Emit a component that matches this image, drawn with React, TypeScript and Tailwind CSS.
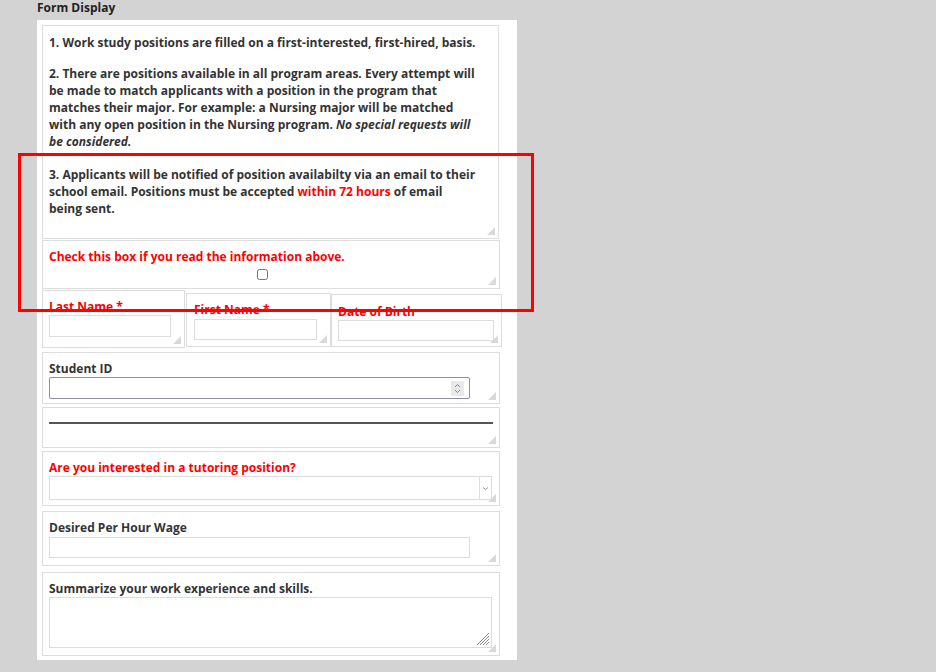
import React from 'react';

const font = { fontFamily: '"Open Sans", sans-serif' };

function Grip() {
  return (
    <svg className="absolute right-[3px] bottom-[3px]" width="8" height="8" viewBox="0 0 8 8">
      <path d="M8 0 L8 8 L0 8 Z" fill="#d9d9d9" />
    </svg>
  );
}

function Box({ className, children }: { className?: string; children?: React.ReactNode }) {
  return (
    <div className={`relative border border-[#dddddd] bg-white ${className ?? ''}`}>
      {children}
      <Grip />
    </div>
  );
}

export default function App() {
  return (
    <div className="relative w-[936px] h-[672px] bg-[#d3d3d3] overflow-hidden pl-[37px]" style={font}>
      <div className="h-[20px] text-[12px] font-bold leading-[16px] text-[#222]">Form Display</div>

      <div className="w-[480px] h-[640px] bg-white px-[5px] pt-[5px] text-[#333] text-[12px] font-bold">
        <Box className="w-[457px] h-[214px] px-[6px] pt-[8px] leading-[17px] whitespace-nowrap">
          <p>1. Work study positions are filled on a first-interested, first-hired, basis.</p>
          <p className="mt-[14px]">
            2. There are positions available in all program areas. Every attempt will
            <br />
            be made to match applicants with a position in the program that
            <br />
            matches their major. For example: a Nursing major will be matched
            <br />
            with any open position in the Nursing program. <i>No special requests will</i>
            <br />
            <i>be considered.</i>
          </p>
          <p className="mt-[16px]">
            3. Applicants will be notified of position availabilty via an email to their
            <br />
            school email. Positions must be accepted <span className="text-[#ff0000]">within 72 hours</span> of email
            <br />
            being sent.
          </p>
        </Box>

        <Box className="mt-[1px] w-[458px] h-[49px] px-[6px] pt-[7px]">
          <div className="text-[#ff0000] leading-[17px]">Check this box if you read the information above.</div>
          <div className="flex justify-center pr-[18px]">
            <input type="checkbox" className="w-[11px] h-[11px] mt-[4px]" />
          </div>
        </Box>

        <div className="mt-[1px] flex items-start">
          <Box className="w-[143px] h-[58px] px-[6px] pt-[8px]">
            <div className="text-[#ff0000] leading-[15px]">Last Name *</div>
            <div className="mt-[1px] w-[122px] h-[22px] border border-[#dddddd]" />
          </Box>
          <Box className="ml-[1px] mt-[3px] w-[145px] h-[54px] px-[7px] pt-[8px]">
            <div className="text-[#ff0000] leading-[15px]">First Name *</div>
            <div className="mt-[2px] w-[123px] h-[21px] border border-[#dddddd]" />
          </Box>
          <Box className="mt-[4px] w-[171px] h-[53px] px-[6px] pt-[9px]">
            <div className="text-[#ff0000] leading-[15px]">Date of Birth</div>
            <div className="mt-[1px] w-[156px] h-[21px] border border-[#dddddd]" />
          </Box>
        </div>

        <Box className="mt-[4px] w-[458px] h-[52px] px-[6px] pt-[8px]">
          <div className="leading-[16px]">Student ID</div>
          <div className="w-[421px] h-[22px] border border-[#8f8f9d] rounded-[2px] flex items-center justify-end pr-[5px]">
            <div className="w-[13px] h-[15px] bg-[#e9e9ed] flex items-center justify-center">
              <svg width="9" height="13" viewBox="0 0 9 13">
                <path d="M2 5 L4.5 2.5 L7 5 M2 8 L4.5 10.5 L7 8" fill="none" stroke="#8a8a8a" strokeWidth="1" />
              </svg>
            </div>
          </div>
        </Box>

        <Box className="mt-[3px] w-[458px] h-[41px] px-[6px] pt-[14px]">
          <div className="w-[444px] h-[2px] bg-[#555555]" />
        </Box>

        <Box className="mt-[3px] w-[458px] h-[55px] px-[6px] pt-[8px]">
          <div className="text-[#ff0000] leading-[16px]">Are you interested in a tutoring position?</div>
          <div className="w-[443px] h-[24px] border border-[#dddddd] flex justify-end">
            <div className="w-[12px] h-full border-l border-[#dddddd] flex items-center justify-center">
              <svg width="7" height="5" viewBox="0 0 7 5">
                <path d="M1 1.5 L3.5 3.5 L6 1.5" fill="none" stroke="#9a9a9a" strokeWidth="1" />
              </svg>
            </div>
          </div>
        </Box>

        <Box className="mt-[5px] w-[458px] h-[55px] px-[6px] pt-[8px]">
          <div className="leading-[16px]">Desired Per Hour Wage</div>
          <div className="mt-[1px] w-[421px] h-[21px] border border-[#dddddd]" />
        </Box>

        <Box className="mt-[6px] w-[458px] h-[84px] px-[6px] pt-[8px]">
          <div className="leading-[16px]">Summarize your work experience and skills.</div>
          <div className="relative w-[443px] h-[51px] border border-[#dddddd]">
            <svg className="absolute right-[1px] bottom-[1px]" width="13" height="13" viewBox="0 0 13 13">
              <path d="M12 3 L3 12 M12 6 L6 12 M12 9 L9 12 M12 0 L0 12" stroke="#8a8a8a" strokeWidth="1" />
            </svg>
          </div>
        </Box>
      </div>

      <div className="absolute left-[18px] top-[153px] w-[516px] h-[159px] border-[3px] border-[#ff0000]" />
    </div>
  );
}
